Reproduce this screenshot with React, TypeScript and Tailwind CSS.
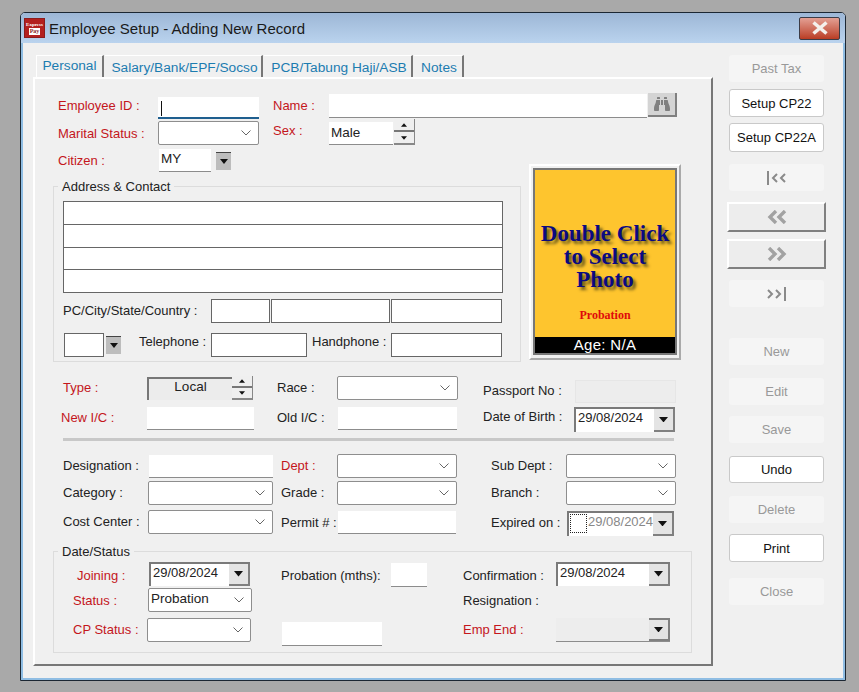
import type { ReactNode } from "react"
import clsx from "clsx"
import { FaBinoculars } from "react-icons/fa"

function Label({ className, red, children }: { className?: string; red?: boolean; children: ReactNode }) {
    return (
        <span className={clsx("h-[16px] shrink-0 whitespace-nowrap text-[13px] leading-[16px]", red ? "text-[#c4161c]" : "text-[#222]", className)}>
            {children}
        </span>
    )
}

function Field({ className, children }: { className?: string; children?: ReactNode }) {
    return (
        <div className={clsx("shrink-0 border-b border-[#8c8c8c] bg-white px-[2px] text-[13.5px] leading-[18px] text-[#222]", className)}>
            {children}
        </div>
    )
}

function BoxField({ className }: { className?: string }) {
    return <div className={clsx("shrink-0 border border-[#666] bg-white", className)} />
}

function Select({ className, value }: { className?: string; value?: string }) {
    return (
        <div className={clsx("flex h-[24px] shrink-0 items-center justify-between rounded-[2px] border border-[#8e8e8e] bg-white pl-[2px] pr-[7px] text-[13.5px] text-[#222]", className)}>
            <span className="-mt-[2px]">{value}</span>
            <svg width="10" height="6" viewBox="0 0 10 6" fill="none" stroke="#666" strokeWidth="1">
                <path d="M0.5 0.5 5 5 9.5 0.5" />
            </svg>
        </div>
    )
}

function Triangle({ down = true, size = 9 }: { down?: boolean; size?: number }) {
    return (
        <svg width={size} height={size / 2 + 1} viewBox="0 0 10 6" fill="#111">
            <path d={down ? "M0 0h10L5 6z" : "M0 6h10L5 0z"} />
        </svg>
    )
}

function DateBox({ className, value, disabled, check }: { className?: string; value?: string; disabled?: boolean; check?: boolean }) {
    return (
        <div className={clsx("flex h-[24px] shrink-0", disabled ? "border-b border-[#8c8c8c] bg-[#ededed]" : "border-l-2 border-t-2 border-[#7a7a7a] bg-white", className)}>
            {check && <div className="mx-[1px] mt-px h-[19px] w-[17px] shrink-0 border border-dotted border-[#222] bg-white" />}
            <div className={clsx("min-w-0 flex-1 whitespace-nowrap text-[13px] leading-[18px]", check ? "text-[#888]" : "pl-[2px] text-[#222]")}>{value}</div>
            <div className={clsx("flex w-[21px] shrink-0 items-center justify-center border-b-2 border-r-2 border-[#808080] bg-[#e4e4e4]", disabled && "border-t-2")}>
                <Triangle />
            </div>
        </div>
    )
}

function DropButton({ className }: { className?: string }) {
    return (
        <div className={clsx("flex h-[18px] w-[15px] shrink-0 items-center justify-center border-t border-[#444] bg-[#bdbdbd]", className)}>
            <Triangle size={8} />
        </div>
    )
}

function Spinner({ className }: { className?: string }) {
    return (
        <div className={clsx("flex w-[21px] shrink-0 flex-col border-b-2 border-r border-[#888] bg-[#efefef]", className)}>
            <div className="flex flex-1 items-center justify-center border-b-2 border-[#777]">
                <Triangle down={false} size={6} />
            </div>
            <div className="flex flex-1 items-center justify-center">
                <Triangle size={6} />
            </div>
        </div>
    )
}

function Button({ className, on, children }: { className?: string; on?: boolean; children: ReactNode }) {
    return (
        <button
            type="button"
            className={clsx(
                "ml-[2px] flex w-[95px] items-center justify-center rounded-[3px] pt-px text-[13px]",
                on ? "border border-[#c9c9c9] bg-white text-[#111]" : "bg-[#f5f5f5] text-[#999]",
                className
            )}
        >
            {children}
        </button>
    )
}

function NavButton({ className, children }: { className?: string; children: ReactNode }) {
    return (
        <div className={clsx("flex h-[30px] w-[99px] items-center justify-center border-2 border-b-[#808080] border-l-white border-r-[#808080] border-t-white bg-[#ededed]", className)}>
            {children}
        </div>
    )
}

// double chevrons on the record buttons, with an optional end bar
function Chevrons({ left, bar }: { left?: boolean; bar?: boolean }) {
    const flip = left ? "" : "scale-x-[-1]"
    if (bar) {
        return (
            <svg className={flip} width="19" height="14" viewBox="0 0 19 14" fill="none" stroke="#8a8a8a">
                <path d="M1 0v14" strokeWidth="2" />
                <path d="M10 3 6 7l4 4M18 3l-4 4 4 4" strokeWidth="2" />
            </svg>
        )
    }
    return (
        <svg className={flip} width="20" height="14" viewBox="0 0 20 14" fill="none" stroke="#a2a2a2" strokeWidth="3.4">
            <path d="M9 1 3 7l6 6M18 1l-6 6 6 6" />
        </svg>
    )
}

export default function App() {
    return (
        <div className="h-[692px] w-[859px] overflow-hidden bg-[#a9a9a9] pl-[20px] pt-[12px] font-['Liberation_Sans',Arial,sans-serif]">
            <div className="h-[669px] w-[826px] rounded-t-[5px] border border-[#1c2733] bg-[#f0f0f0]">
                {/* title bar */}
                <div className="flex h-[30px] items-center rounded-t-[4px] bg-gradient-to-b from-[#9db7d6] to-[#bad3ee] pl-[3px]">
                    <div className="flex h-[20px] w-[21px] shrink-0 flex-col items-center justify-center border border-[#8c1c1c] bg-[#b3201f] font-['Liberation_Serif',serif] text-[6px] font-bold leading-[7px] text-white">
                        <span className="text-[5px]">Express</span>
                        <span className="bg-white px-[1px] text-[#8c1c1c]">Pay</span>
                    </div>
                    <span className="ml-[4px] mt-[2px] whitespace-nowrap text-[15px] text-[#1a1a1a]">Employee Setup - Adding New Record</span>
                    <div className="ml-auto mr-[5px] flex h-[23px] w-[41px] items-center justify-center rounded-[2px] border border-[#3c3c46] bg-gradient-to-b from-[#e3a094] via-[#cf6f5d] to-[#b93c22]">
                        <svg width="18" height="14" viewBox="0 0 18 14" fill="none" stroke="#f4f0ec" strokeWidth="3.6">
                            <path d="M2.5 1.5 15.5 12.5M15.5 1.5 2.5 12.5" />
                        </svg>
                    </div>
                </div>

                {/* body */}
                <div className="flex h-[637px] border-x-2 border-b-2 border-x-[#8fbde3] border-b-[#8fbde3] pl-[10px] pt-[12px]">
                    <div className="w-[680px] shrink-0">
                        <div className="flex h-[22px] pl-[3px] text-[13.7px] text-[#1c7cb0]">
                            <div className="flex w-[68px] items-center justify-center border-l border-r-2 border-t border-l-white border-r-[#777] border-t-white pb-[1px]">Personal</div>
                            <div className="ml-[1px] flex w-[158px] items-center justify-center border-r-2 border-t border-r-[#777] border-t-white pl-[3px] pt-[3px]">Salary/Bank/EPF/Socso</div>
                            <div className="ml-[1px] flex w-[149px] items-center justify-center border-r-2 border-t border-r-[#777] border-t-white pl-[3px] pt-[3px]">PCB/Tabung Haji/ASB</div>
                            <div className="ml-[1px] flex w-[50px] items-center justify-center border-r-2 border-t border-r-[#777] border-t-white pl-[2px] pt-[3px]">Notes</div>
                        </div>

                        <div className="h-[589px] border-2 border-b-[#777] border-l-white border-r-[#777] border-t-white pl-[18px] pt-[14px]">
                            {/* employee id row */}
                            <div className="flex h-[26px] pl-[5px]">
                                <Label red className="mt-[5px] w-[100px]">Employee ID :</Label>
                                <div className="relative mt-[4px] h-[22px] w-[101px] border-b-2 border-[#1f5f8f] bg-white">
                                    <div className="ml-[3px] mt-[4px] h-[15px] w-px bg-[#111]" />
                                </div>
                                <Label red className="ml-[14px] mt-[5px] w-[56px]">Name :</Label>
                                <Field className="mt-[1px] h-[24px] w-[318px]" />
                                <div className="ml-[1px] flex h-[24px] w-[29px] shrink-0 items-center justify-center border-b-2 border-r-2 border-[#808080] bg-[#d4d4d4] text-[#808080]">
                                    <FaBinoculars size={16} />
                                </div>
                            </div>
                            {/* marital row */}
                            <div className="flex h-[27px] pl-[5px]">
                                <Label red className="mt-[7px] w-[100px]">Marital Status :</Label>
                                <Select className="mt-[2px] w-[101px]" />
                                <Label red className="ml-[14px] mt-[4px] w-[56px]">Sex :</Label>
                                <Field className="mt-[3px] h-[23px] w-[64px] pt-[2px]">Male</Field>
                                <Spinner className="ml-[1px] h-[26px]" />
                            </div>

                            <div className="flex">
                                <div className="w-[468px] shrink-0">
                                    <div className="flex h-[40px] pl-[5px]">
                                        <Label red className="mt-[7px] w-[101px]">Citizen :</Label>
                                        <Field className="mt-[3px] h-[23px] w-[52px] pl-[2px] pt-[1px]">MY</Field>
                                        <DropButton className="ml-[5px] mt-[6px]" />
                                    </div>
                                    {/* address group */}
                                    <div className="relative h-[176px] border border-[#dcdcdc] pl-[9px] pt-[14px]">
                                        <span className="absolute -top-[8px] left-[4px] bg-[#f0f0f0] px-[4px] text-[13px] leading-[16px] text-[#222]">Address &amp; Contact</span>
                                        <div className="flex w-[440px] flex-col">
                                            <BoxField className="h-[24px]" />
                                            <BoxField className="-mt-px h-[24px]" />
                                            <BoxField className="-mt-px h-[23px]" />
                                            <BoxField className="-mt-px h-[24px]" />
                                        </div>
                                        <div className="mt-[6px] flex h-[34px]">
                                            <Label className="mt-[4px] w-[148px]">PC/City/State/Country :</Label>
                                            <BoxField className="h-[24px] w-[59px]" />
                                            <BoxField className="ml-px h-[24px] w-[119px]" />
                                            <BoxField className="ml-px h-[24px] w-[111px]" />
                                        </div>
                                        <div className="flex">
                                            <BoxField className="ml-px h-[24px] w-[40px]" />
                                            <DropButton className="ml-[2px] mt-[3px]" />
                                            <Label className="ml-[18px] mt-[1px] w-[72px]">Telephone :</Label>
                                            <BoxField className="h-[24px] w-[96px]" />
                                            <Label className="ml-[5px] mt-[1px] w-[79px]">Handphone :</Label>
                                            <BoxField className="h-[24px] w-[111px]" />
                                        </div>
                                    </div>
                                </div>
                                {/* photo */}
                                <div className="ml-[8px] mt-[18px] h-[196px] w-[152px] shrink-0 border-2 border-b-[#aaa] border-l-white border-r-[#aaa] border-t-white p-[2px]">
                                    <div className="flex h-[187px] w-[144px] flex-col border-[2px] border-[#777] bg-[#fec52e]">
                                        <div className="mt-[52px] text-center font-['Liberation_Serif',serif] text-[23px] font-bold leading-[23px] text-[#0a0a80] [text-shadow:3px_3px_3px_#6b5a1a]">
                                            Double Click
                                            <br />
                                            to Select
                                            <br />
                                            Photo
                                        </div>
                                        <div className="mt-[15px] text-center font-['Liberation_Serif',serif] text-[12px] font-bold text-[#e00a0a]">Probation</div>
                                        <div className="mt-auto h-[16px] bg-black text-center text-[15px] leading-[16px] tracking-[0.3px] text-white">Age: N/A</div>
                                    </div>
                                </div>
                            </div>

                            {/* type row */}
                            <div className="mt-[14px] flex h-[31px]">
                                <Label red className="ml-[10px] mt-[4px] w-[84px]">Type :</Label>
                                <div className="mt-[1px] h-[23px] w-[85px] shrink-0 border-l-2 border-t-2 border-[#777] bg-[#ececec] text-center text-[13.5px] leading-[15px] text-[#222]">Local</div>
                                <Spinner className="h-[24px]" />
                                <Label className="ml-[24px] mt-[4px] w-[60px]">Race :</Label>
                                <Select className="w-[121px]" />
                                <Label className="ml-[25px] mt-[7px] w-[92px]">Passport No :</Label>
                                <div className="mt-[4px] h-[23px] w-[101px] shrink-0 border border-[#e6e6e6] bg-[#ededed]" />
                            </div>
                            <div className="flex h-[31px]">
                                <Label red className="ml-[8px] mt-[3px] w-[86px]">New I/C :</Label>
                                <Field className="h-[23px] w-[107px]" />
                                <Label className="ml-[23px] mt-[3px] w-[61px]">Old I/C :</Label>
                                <Field className="h-[23px] w-[119px]" />
                                <Label className="ml-[26px] mt-[2px] w-[91px]">Date of Birth :</Label>
                                <DateBox className="h-[25px] w-[101px]" value="29/08/2024" />
                            </div>
                            <div className="ml-[10px] h-[3px] w-[611px] bg-[#c8c8c8]" />

                            {/* job rows */}
                            <div className="mt-[13px] flex h-[27px]">
                                <Label className="ml-[10px] mt-[4px] w-[86px]">Designation :</Label>
                                <Field className="mt-[1px] h-[23px] w-[124px]" />
                                <Label red className="ml-[8px] mt-[4px] w-[56px]">Dept :</Label>
                                <Select className="w-[120px]" />
                                <Label className="ml-[34px] mt-[4px] w-[75px]">Sub Dept :</Label>
                                <Select className="w-[110px]" />
                            </div>
                            <div className="flex h-[29px]">
                                <Label className="ml-[10px] mt-[4px] w-[85px]">Category :</Label>
                                <Select className="w-[125px]" />
                                <Label className="ml-[8px] mt-[4px] w-[56px]">Grade :</Label>
                                <Select className="w-[120px]" />
                                <Label className="ml-[34px] mt-[4px] w-[75px]">Branch :</Label>
                                <Select className="w-[110px]" />
                            </div>
                            <div className="flex h-[41px]">
                                <Label className="ml-[10px] mt-[4px] w-[85px]">Cost Center :</Label>
                                <Select className="w-[125px]" />
                                <Label className="ml-[8px] mt-[5px] w-[57px]">Permit # :</Label>
                                <Field className="mt-[1px] h-[23px] w-[118px]" />
                                <Label className="ml-[35px] mt-[5px] w-[76px]">Expired on :</Label>
                                <DateBox check className="mt-[1px] h-[25px] w-[107px]" value="29/08/2024" />
                            </div>

                            {/* date and status group */}
                            <div className="relative h-[102px] w-[639px] border border-[#dcdcdc] pt-[10px]">
                                <span className="absolute -top-[8px] left-[4px] bg-[#f0f0f0] px-[4px] text-[13px] leading-[16px] text-[#222]">Date/Status</span>
                                <div className="flex h-[26px]">
                                    <Label red className="ml-[23px] mt-[6px] w-[72px]">Joining :</Label>
                                    <DateBox className="w-[101px]" value="29/08/2024" />
                                    <Label className="ml-[31px] mt-[6px] w-[110px]">Probation (mths):</Label>
                                    <Field className="mt-[1px] h-[24px] w-[36px]" />
                                    <Label className="ml-[36px] mt-[6px] w-[93px]">Confirmation :</Label>
                                    <DateBox className="w-[114px]" value="29/08/2024" />
                                </div>
                                <div className="flex h-[30px]">
                                    <Label red className="ml-[19px] mt-[5px] w-[75px]">Status :</Label>
                                    <Select className="w-[104px]" value="Probation" />
                                    <Label className="ml-[211px] mt-[5px]">Resignation :</Label>
                                </div>
                                <div className="flex">
                                    <Label red className="ml-[19px] mt-[4px] w-[74px]">CP Status :</Label>
                                    <Select className="w-[104px]" />
                                    <Field className="ml-[31px] mt-[4px] h-[24px] w-[100px]" />
                                    <Label red className="ml-[81px] mt-[4px] w-[93px]">Emp End :</Label>
                                    <DateBox disabled className="w-[114px]" />
                                </div>
                            </div>
                        </div>
                    </div>

                    {/* side buttons */}
                    <div className="ml-[14px] flex w-[99px] shrink-0 flex-col">
                        <Button className="h-[27px]">Past Tax</Button>
                        <Button on className="mt-[7px] h-[28px]">Setup CP22</Button>
                        <Button on className="mt-[6px] h-[29px]">Setup CP22A</Button>
                        <Button className="mt-[12px] h-[27px]"><Chevrons left bar /></Button>
                        <NavButton className="mt-[11px]"><Chevrons left /></NavButton>
                        <NavButton className="mt-[7px]"><Chevrons /></NavButton>
                        <Button className="mt-[11px] h-[27px]"><Chevrons bar /></Button>
                        <Button className="mt-[31px] h-[27px]">New</Button>
                        <Button className="mt-[13px] h-[27px]">Edit</Button>
                        <Button className="mt-[11px] h-[27px]">Save</Button>
                        <Button on className="mt-[13px] h-[27px]">Undo</Button>
                        <Button className="mt-[13px] h-[27px]">Delete</Button>
                        <Button on className="mt-[11px] h-[28px]">Print</Button>
                        <Button className="mt-[16px] h-[27px]">Close</Button>
                    </div>
                </div>
            </div>
        </div>
    )
}
